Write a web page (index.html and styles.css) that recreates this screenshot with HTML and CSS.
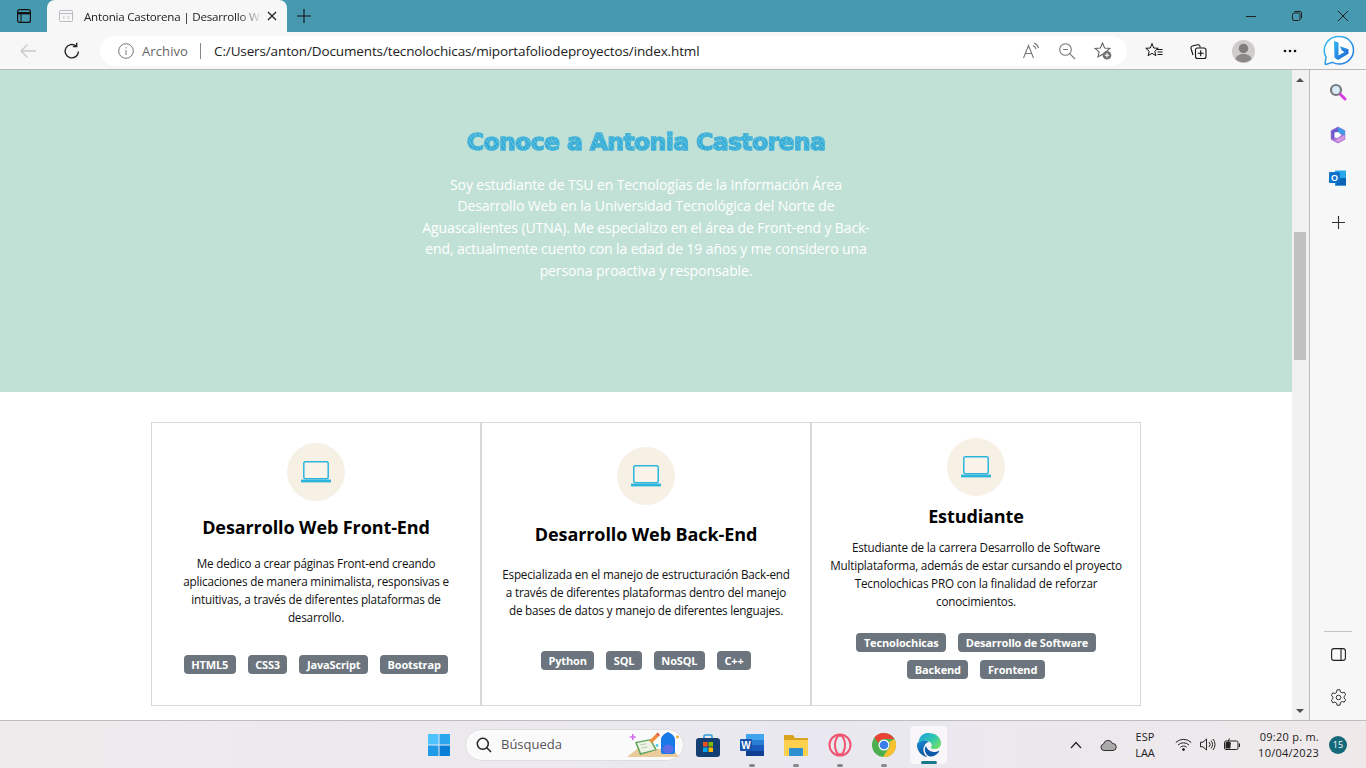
FILE: index.html
```html
<!DOCTYPE html>
<html lang="es">
<head>
    <meta charset="UTF-8">
    <meta name="viewport" content="width=device-width, initial-scale=1.0">
    <title>Antonia Castorena | Desarrollo Web</title>
    <link rel="stylesheet" href="styles.css">
</head>
<body>
    <div class="tabstrip">
        <span class="cell tab-actions">
            <svg width="16" height="16" viewBox="0 0 16 16" fill="none" stroke="#111" stroke-width="1.2"><rect x="1.6" y="1.6" width="12.8" height="12.8" rx="2"/><path d="M1.6 5.2h12.8" stroke-width="2.4"/><path d="M5 5v9" stroke-width="1"/></svg>
        </span>
        <div class="tab">
            <svg class="favicon" width="14" height="14" viewBox="0 0 14 14" fill="none" stroke="#bdb9c2"><rect x=".5" y="1.5" width="13" height="11" rx="1"/><path d="M.5 4.500h13M5.500 7 4 8.500 5.500 10M8.500 7 10 8.500 8.500 10"/></svg>
            <span class="tab-title">Antonia Castorena | Desarrollo W</span>
            <svg class="tab-close" width="10" height="10" viewBox="0 0 10 10" stroke="#222" stroke-width="1.3"><path d="M1 1l8 8M9 1l-8 8"/></svg>
        </div>
        <span class="cell new-tab">
            <svg width="14" height="14" viewBox="0 0 14 14" stroke="#111" stroke-width="1.1"><path d="M7 0v14M0 7h14"/></svg>
        </span>
        <div class="window-btns">
            <span class="cell win-btn"><svg width="12" height="12" viewBox="0 0 12 12" stroke="#222"><path d="M1 6.5h10"/></svg></span>
            <span class="cell win-btn"><svg width="12" height="12" viewBox="0 0 12 12" fill="none" stroke="#222"><rect x="1.5" y="3" width="7.500" height="7.500" rx="1.500"/><path d="M3.500 1.500h5.500a1.500 1.500 0 0 1 1.500 1.500v5.500"/></svg></span>
            <span class="cell win-btn"><svg width="12" height="12" viewBox="0 0 12 12" stroke="#222"><path d="M1 1l10 10M11 1 1 11"/></svg></span>
        </div>
    </div>

    <div class="toolbar">
        <span class="cell nav-btn">
            <svg width="18" height="16" viewBox="0 0 18 16" fill="none" stroke="#c9c9c9" stroke-width="1.3"><path d="M17 8H2M8.500 1.500 2 8l6.500 6.500"/></svg>
        </span>
        <span class="cell nav-btn">
            <svg width="18" height="18" viewBox="0 0 18 18" fill="none" stroke="#222" stroke-width="1.4"><path d="M15.500 9.500a6.700 6.700 0 1 1-2.300-5.400"/><path d="M13.700 .8v3.800H9.900"/></svg>
        </span>
        <div class="address">
            <svg class="info" width="16" height="16" viewBox="0 0 16 16" fill="none" stroke="#777"><circle cx="8" cy="8" r="7.300"/><path d="M8 7v5M8 4.200v1.300"/></svg>
            <span class="archivo">Archivo</span>
            <span class="address-sep"></span>
            <span class="url">C:/Users/anton/Documents/tecnolochicas/miportafoliodeproyectos/index.html</span>
            <div class="address-icons">
                <svg width="18" height="18" viewBox="0 0 18 18" fill="none" stroke="#777" stroke-width="1.100"><path d="M1.500 16 6.500 3.500l5 12.500M3.300 11.500h6.400"/><path d="M11 3.500a5 5 0 0 1 3 3.500M12 1a7 7 0 0 1 4.500 5"/></svg>
                <svg width="18" height="18" viewBox="0 0 18 18" fill="none" stroke="#777" stroke-width="1.100"><circle cx="7.500" cy="7.500" r="5.800"/><path d="M11.700 11.700 17 17M5 7.500h5"/></svg>
                <svg width="18" height="18" viewBox="0 0 18 18" fill="none" stroke="#666" stroke-width="1.100"><path d="M8.500 1 10.600 6l5.200.5-3.900 3.400 1.100 5-4.500-2.700-4.500 2.700 1.100-5L1.200 6.500 6.400 6z"/><circle cx="13" cy="13.300" r="4.300" fill="#707070" stroke="none"/><path d="M13 11v4.600M10.700 13.300h4.600" stroke="#fff"/></svg>
            </div>
        </div>
        <span class="cell tool-btn tool-fav">
            <svg width="18" height="18" viewBox="0 0 18 18" fill="none" stroke="#111" stroke-width="1"><path d="M7 1.500 8.700 6l4.500.3-3.400 3 1.100 4.400-3.900-2.400-3.900 2.400 1.100-4.400-3.400-3L5.300 6z"/><path d="M12 7.500h5.500M12.500 10h5M12.500 12.500h5"/></svg>
        </span>
        <span class="cell tool-btn tool-coll">
            <svg width="18" height="18" viewBox="0 0 18 18" fill="none" stroke="#111" stroke-width="1.100"><path d="M4 13 2 6.500A2 2 0 0 1 3.400 4l5-1.300a2 2 0 0 1 2.500 1.400l.3 1.400"/><rect x="6.500" y="6" width="10.500" height="10.500" rx="2" fill="#f7f7f7"/><path d="M11.700 8.300v6M8.700 11.300h6"/></svg>
        </span>
        <span class="cell tool-btn tool-profile">
            <svg width="23" height="23" viewBox="0 0 23 23"><circle cx="11.500" cy="11.500" r="11.500" fill="#cfcccb"/><circle cx="11.500" cy="8.500" r="4.700" fill="#7f7c7b"/><path d="M3.500 19c1-3.500 4-5 8-5s7 1.500 8 5a11.500 11.500 0 0 1-16 0z" fill="#8b8887"/></svg>
        </span>
        <span class="cell tool-btn tool-more">
            <svg width="14" height="4" viewBox="0 0 14 4" fill="#111"><circle cx="2" cy="2" r="1.300"/><circle cx="7" cy="2" r="1.300"/><circle cx="12" cy="2" r="1.300"/></svg>
        </span>
        <span class="cell bing-btn">
            <svg width="32" height="32" viewBox="0 0 32 32">
                <defs>
                    <linearGradient id="bingB" x1="0" y1="0" x2="1" y2="1"><stop offset="0" stop-color="#35b8f0"/><stop offset="1" stop-color="#1a5fd8"/></linearGradient>
                    <linearGradient id="bingRim" x1="0" y1="0" x2="1" y2="1"><stop offset="0" stop-color="#3cc4f2"/><stop offset="1" stop-color="#1f6fe0"/></linearGradient>
                </defs>
                <path d="M16.500 1.500c8 0 14 6 14 13.500s-6 14-14 14c-2.500 0-5-.5-7-1.700l-6 2c-1 .3-1.500-.3-1.300-1.200l.8-6A14 14 0 0 1 16.500 1.500z" fill="#fff" stroke="url(#bingRim)" stroke-width="1.500"/>
                <path d="M11 6l4.500 1.600v12.800l6-3.500-2.800-1.300-1.700-4.300 8.500 3v4.500l-10.500 6.200-3.500-2.300z" fill="url(#bingB)"/>
            </svg>
        </span>
    </div>

    <div class="workspace">
        <main class="page">
            <section class="hero">
                <h1 class="hero-title">Conoce a Antonia Castorena</h1>
                <p class="hero-text">Soy estudiante de TSU en Tecnologías de la Información Área Desarrollo Web en la Universidad Tecnológica del Norte de Aguascalientes (UTNA). Me especializo en el área de Front-end y Back-end, actualmente cuento con la edad de 19 años y me considero una persona proactiva y responsable.</p>
            </section>
            <section class="cards">
                <article class="card">
                    <div class="card-icon">
                        <svg width="30" height="22" viewBox="0 0 30 22" fill="none" stroke="#2cb5dc" stroke-width="1.500"><rect x="2.800" y=".8" width="24.400" height="16.900" rx="1.500" fill="#f9f3ea"/><path d="M0 20h30" stroke-width="2.800"/></svg>
                    </div>
                    <h2 class="card-title">Desarrollo Web Front-End</h2>
                    <p class="card-text">Me dedico a crear páginas Front-end creando aplicaciones de manera minimalista, responsivas e intuitivas, a través de diferentes plataformas de desarrollo.</p>
                    <div class="tags">
                        <span class="tag">HTML5</span><span class="tag">CSS3</span><span class="tag">JavaScript</span><span class="tag">Bootstrap</span>
                    </div>
                </article>
                <article class="card">
                    <div class="card-icon">
                        <svg width="30" height="22" viewBox="0 0 30 22" fill="none" stroke="#2cb5dc" stroke-width="1.500"><rect x="2.800" y=".8" width="24.400" height="16.900" rx="1.500" fill="#f9f3ea"/><path d="M0 20h30" stroke-width="2.800"/></svg>
                    </div>
                    <h2 class="card-title">Desarrollo Web Back-End</h2>
                    <p class="card-text">Especializada en el manejo de estructuración Back-end a través de diferentes plataformas dentro del manejo de bases de datos y manejo de diferentes lenguajes.</p>
                    <div class="tags">
                        <span class="tag">Python</span><span class="tag">SQL</span><span class="tag">NoSQL</span><span class="tag">C++</span>
                    </div>
                </article>
                <article class="card">
                    <div class="card-icon">
                        <svg width="30" height="22" viewBox="0 0 30 22" fill="none" stroke="#2cb5dc" stroke-width="1.500"><rect x="2.800" y=".8" width="24.400" height="16.900" rx="1.500" fill="#f9f3ea"/><path d="M0 20h30" stroke-width="2.800"/></svg>
                    </div>
                    <h2 class="card-title">Estudiante</h2>
                    <p class="card-text">Estudiante de la carrera Desarrollo de Software Multiplataforma, además de estar cursando el proyecto Tecnolochicas PRO con la finalidad de reforzar conocimientos.</p>
                    <div class="tags">
                        <span class="tag">Tecnolochicas</span><span class="tag">Desarrollo de Software</span><span class="tag">Backend</span><span class="tag">Frontend</span>
                    </div>
                </article>
            </section>
        </main>

        <div class="scrollbar">
            <span class="arrow-up"></span>
            <div class="scroll-track"><div class="scroll-thumb"></div></div>
            <span class="arrow-down"></span>
        </div>

        <aside class="sidebar">
            <span class="cell side-btn">
                <svg width="18" height="18" viewBox="0 0 18 18" fill="none"><circle cx="7" cy="7" r="5" fill="#d8ecf7" stroke="#77777c" stroke-width="2.200"/><path d="M11.500 11.500l4.500 4.500" stroke="#d63ce0" stroke-width="3" stroke-linecap="round"/></svg>
            </span>
            <span class="cell side-btn">
                <svg width="18" height="18" viewBox="0 0 18 18" stroke-linejoin="round"><path d="M9 1.500 15.500 5v8L9 16.500 2.500 13V5z" fill="#a66fd8" stroke="#a66fd8" stroke-width="1.500"/><path d="M9 1.500 15.500 5v4L9 6z" fill="#3d9be6" stroke="#3d9be6"/><path d="M2.500 5 9 1.500V6l-3.500 2v4l-3 1z" fill="#6a5cc8"/><path d="M15.500 9v4L9 16.500l-3-2.500z" fill="#d49be0"/><path d="M5.500 6.500 9 6l3.500 3-4 3-3-.5z" fill="#fff"/></svg>
            </span>
            <span class="cell side-btn">
                <svg width="18" height="18" viewBox="0 0 18 18"><path d="M6 1.500h11v15H6z" fill="#28a8ea"/><path d="M11 9h6v7.500H6z" fill="#0a64b8"/><rect y="3" width="11" height="11" rx="1" fill="#0f72c9"/><text x="5.500" y="11.800" class="outlook-o">O</text></svg>
            </span>
            <span class="cell side-btn side-plus">
                <svg width="13" height="13" viewBox="0 0 13 13" stroke="#333" stroke-width="1.100"><path d="M6.500 0v13M0 6.500h13"/></svg>
            </span>
            <div class="side-spacer"></div>
            <div class="side-sep"></div>
            <span class="cell side-btn">
                <svg width="15" height="13" viewBox="0 0 15 13" fill="none" stroke="#222" stroke-width="1.100"><rect x=".6" y=".6" width="13.800" height="11.800" rx="2.400"/><path d="M10 .6v11.800"/></svg>
            </span>
            <span class="cell side-btn">
                <svg width="17" height="17" viewBox="0 0 17 17" fill="none" stroke="#333" stroke-width="1"><path d="M7 .8h3l.5 2.200 1.600.9 2.100-.7 1.500 2.600-1.600 1.500v1.800l1.600 1.500-1.500 2.600-2.100-.7-1.600.9L10 16.200H7l-.5-2.200-1.600-.9-2.100.7L1.300 11.200l1.600-1.500V7.900L1.300 6.400l1.500-2.600 2.100.7 1.600-.9z"/><circle cx="8.500" cy="8.500" r="2.300"/></svg>
            </span>
        </aside>
    </div>

    <footer class="taskbar">
        <span class="cell task-icon task-start">
            <svg width="24" height="24" viewBox="0 0 24 24"><path d="M1 1h10.500v10.500H1z" fill="#4cc2ff"/><path d="M12.500 1H23v10.500H12.500z" fill="#2aa6ee"/><path d="M1 12.500h10.500V23H1z" fill="#1f9be8"/><path d="M12.500 12.500H23V23H12.500z" fill="#0a7fd6"/></svg>
        </span>
        <div class="task-search">
            <svg width="16" height="16" viewBox="0 0 16 16" fill="none" stroke="#222" stroke-width="1.500"><circle cx="6.800" cy="6.800" r="5.500"/><path d="M10.800 10.800 15 15"/></svg>
            <span class="task-search-text">Búsqueda</span>
            <svg class="search-art" width="58" height="30" viewBox="0 0 58 30">
                <path d="M4 27 14 19h36l6 8z" fill="#eccb9b"/>
                <path d="M12 12 28 9l6 11-17 5z" fill="#5fa55a"/>
                <path d="M14 13l13-2.500 5 9L18 23z" fill="#eef3e5"/>
                <path d="M17 15l6-1.200M18.500 18l6-1.200" stroke="#b9c9b0"/>
                <path d="M26 11l7-7 2.500 2.500L29 13z" fill="#ef8f3c"/>
                <path d="M33 4l1.500-1.500L37 5l-1.500 1.500z" fill="#e8503c"/>
                <path d="M38 10c0-4 3-6 7-8 4 2 7 4 7 8v12a2 2 0 0 1-2 2H40a2 2 0 0 1-2-2z" fill="#1579e8"/>
                <ellipse cx="45" cy="19" rx="5.500" ry="4.500" fill="#5a6ee8"/>
                <path d="M9 4h1.600v2.200h2.200v1.600h-2.200V10H9V7.800H6.800V6.200H9z" fill="#d26ff0"/>
                <circle cx="34" cy="15.500" r="1.400" fill="#50c8e8"/>
                <circle cx="54.500" cy="7" r="1.400" fill="#f2a53b"/>
            </svg>
        </div>
        <span class="cell task-icon task-apps">
            <svg width="24" height="24" viewBox="0 0 24 24" fill="none"><path d="M8 5V3a1 1 0 0 1 1-1h6a1 1 0 0 1 1 1v2" stroke="#2b9fd9" stroke-width="1.500"/><rect y="5" width="24" height="19" rx="3" fill="#143f72"/><rect x="7" y="9" width="4.500" height="4.500" fill="#f25022"/><rect x="12.500" y="9" width="4.500" height="4.500" fill="#7fba00"/><rect x="7" y="14.500" width="4.500" height="4.500" fill="#00a4ef"/><rect x="12.500" y="14.500" width="4.500" height="4.500" fill="#ffb900"/></svg>
        </span>
        <span class="cell task-icon task-running">
            <svg width="24" height="24" viewBox="0 0 24 24"><rect x="6" y="1" width="18" height="22" rx="1" fill="#2b7cd3"/><rect x="6" y="1" width="18" height="6" fill="#41a5ee"/><rect x="6" y="12" width="18" height="6" fill="#185abd"/><rect x="6" y="18" width="18" height="5" fill="#103f91"/><rect y="6" width="12" height="12" rx="1" fill="#1753ab"/><text x="6" y="15.500" class="word-w">W</text></svg>
            <span class="dot"></span>
        </span>
        <span class="cell task-icon task-running">
            <svg width="24" height="22" viewBox="0 0 24 22"><path d="M0 2a1 1 0 0 1 1-1h8l2 3h12a1 1 0 0 1 1 1v3H0z" fill="#d9a320"/><path d="M0 6h24v15a1 1 0 0 1-1 1H1a1 1 0 0 1-1-1z" fill="#fdd04f"/><rect x="5" y="14" width="14" height="8" rx="1" fill="#2d8fd0"/></svg>
            <span class="dot"></span>
        </span>
        <span class="cell task-icon task-running">
            <svg width="24" height="24" viewBox="0 0 24 24" fill="none" stroke="#f0536d" stroke-width="2"><circle cx="12" cy="12" r="10.500"/><ellipse cx="12" cy="12" rx="5" ry="9.500"/></svg>
            <span class="dot"></span>
        </span>
        <span class="cell task-icon task-running">
            <svg width="24" height="24" viewBox="0 0 24 24"><circle cx="12" cy="12" r="12" fill="#4caf50"/><path d="M12 0a12 12 0 0 1 10.400 6H12a6 6 0 0 0-5.600 3.800L2.400 4.400A12 12 0 0 1 12 0z" fill="#ea4335"/><path d="M22.400 6A12 12 0 0 1 11 24l4.800-7.500A6 6 0 0 0 17.200 9z" fill="#fbc02d"/><circle cx="12" cy="12" r="5.500" fill="#fff"/><circle cx="12" cy="12" r="4.300" fill="#3b7de8"/></svg>
            <span class="dot"></span>
        </span>
        <span class="cell task-icon task-active">
            <svg width="24" height="24" viewBox="0 0 24 24">
                <defs>
                    <linearGradient id="edgeTop" x1="0" y1="0" x2="1" y2=".7"><stop offset="0" stop-color="#1b9de2"/><stop offset=".6" stop-color="#30c8b0"/><stop offset="1" stop-color="#6fdc6a"/></linearGradient>
                    <linearGradient id="edgeLeft" x1="0" y1="0" x2=".6" y2="1"><stop offset="0" stop-color="#1a8fdc"/><stop offset="1" stop-color="#0a4f9a"/></linearGradient>
                </defs>
                <path d="M21.860 17.860q.14 0 .25.12.1.13.1.25t-.11.33l-.32.46-.43.53-.44.5q-.21.25-.38.42l-.22.23q-.58.53-1.340 1.040-.76.51-1.600.91-.86.4-1.740.64t-1.670.24q-.9 0-1.690-.28-.8-.28-1.480-.78-.68-.5-1.220-1.170-.53-.66-.92-1.440-.38-.77-.58-1.600-.2-.83-.2-1.670 0-1 .32-1.960.33-.97.87-1.800.14.95.55 1.770.41.82 1.020 1.500.6.68 1.380 1.210.78.54 1.640.9.86.36 1.770.56.92.2 1.800.2 1.120 0 2.180-.24 1.060-.23 2.060-.72l.2-.1.2-.05z" fill="#0c5aa8"/>
                <path d="M6.360 16.590q0 1.100.27 2.150.27 1.060.78 2.030.51.96 1.240 1.770.74.82 1.660 1.400-1.470-.2-2.800-.74-1.330-.55-2.480-1.370-1.150-.83-2.080-1.900-.92-1.070-1.580-2.330T.36 14.940Q0 13.540 0 12.060q0-.81.32-1.490.31-.68.83-1.230.53-.55 1.200-.96.66-.4 1.350-.66.74-.27 1.500-.39.78-.12 1.550-.12.7 0 1.420.1.72.12 1.400.35.68.23 1.320.57.63.35 1.160.83-.35 0-.7.07-.33.07-.65.23v-.02q-.63.28-1.200.74-.57.46-1.050 1.040-.48.58-.87 1.260-.38.67-.65 1.390-.27.71-.42 1.440-.15.72-.15 1.380z" fill="url(#edgeLeft)"/>
                <path d="M11.960.06q1.700 0 3.330.39 1.630.38 3.070 1.150 1.430.77 2.620 1.930 1.180 1.160 1.980 2.700.49.94.76 1.960.28 1 .28 2.080 0 .89-.23 1.700-.24.8-.69 1.480-.45.68-1.100 1.220-.64.53-1.450.88-.54.24-1.110.36-.58.13-1.160.13-.42 0-.97-.03-.54-.03-1.100-.12-.55-.09-1.090-.25-.53-.16-.95-.38-.2-.12-.31-.28-.11-.16-.11-.4 0-.08.03-.12.03-.05.06-.1l.1-.13.08-.14q.33-.38.53-.87.2-.49.2-1.010 0-.79-.36-1.480-.37-.69-.97-1.230-.6-.53-1.350-.92-.76-.39-1.530-.64-.78-.24-1.510-.36-.74-.12-1.290-.12-.86 0-1.720.17-.86.18-1.670.52-.8.34-1.520.84-.72.5-1.320 1.150.05-1.400.37-2.710.33-1.310.96-2.470.63-1.160 1.520-2.120.9-.96 2.010-1.640 1.110-.68 2.400-1.050 1.300-.37 2.730-.37z" fill="url(#edgeTop)"/>
            </svg>
            <span class="active-bar"></span>
        </span>
        <div class="tray">
            <svg class="tray-chevron" width="12" height="8" viewBox="0 0 12 8" fill="none" stroke="#222" stroke-width="1.200"><path d="M1 7l5-5.500L11 7"/></svg>
            <svg class="tray-cloud" width="17" height="12" viewBox="0 0 17 12" fill="#aaa" stroke="#333"><path d="M4 11.500a3.300 3.300 0 0 1-.5-6.500 4.700 4.700 0 0 1 9-.5 3.500 3.500 0 0 1 .5 7z"/></svg>
            <div class="tray-lang"><span>ESP</span><span>LAA</span></div>
            <svg class="tray-wifi" width="17" height="13" viewBox="0 0 17 13" fill="none" stroke="#222"><path d="M.8 4.500a11 11 0 0 1 15.400 0M3 7a8 8 0 0 1 11 0M5.300 9.300a4.600 4.600 0 0 1 6.400 0"/><circle cx="8.500" cy="11.500" r="1" fill="#222"/></svg>
            <svg class="tray-sound" width="16" height="13" viewBox="0 0 16 13" fill="none" stroke="#222"><path d="M.5 4.200h2.500L6.500 1v11L3 8.800H.5z"/><path d="M9 4a3.500 3.500 0 0 1 0 5M11 2.500a6 6 0 0 1 0 8M13 1a8.500 8.500 0 0 1 0 11"/></svg>
            <svg class="tray-battery" width="17" height="13" viewBox="0 0 17 13" fill="none" stroke="#222"><rect x=".5" y="3" width="13.500" height="8.500" rx="1.500"/><path d="M15.500 5.500v3.500"/><path d="M2 4.500h4v5.500H2z" fill="#222"/><path d="M5.500.5 3.500 5h3L4.500 9.500" stroke-width="1"/></svg>
            <div class="tray-clock"><span>09:20 p. m.</span><span>10/04/2023</span></div>
            <span class="tray-badge">15</span>
        </div>
    </footer>
</body>
</html>
```

FILE: styles.css
```css
* {
    box-sizing: border-box;
}

html, body {
    margin: 0;
    height: 768px;
    overflow: hidden;
}

body {
    font-family: "Open Sans", "Noto Sans", sans-serif;
    display: flex;
    flex-direction: column;
    background: #fff;
    color: #000;
}

.cell {
    display: flex;
    align-items: center;
    justify-content: center;
    flex: none;
}

/* top of the browser */
.tabstrip {
    height: 32px;
    background-color: #4699ae;
    display: flex;
    flex: none;
}

.tab-actions {
    width: 47px;
}

.tab {
    width: 240px;
    background-color: #f7f7f7;
    border-radius: 8px 8px 0 0;
    display: flex;
    align-items: center;
    padding: 0 10px 0 12px;
}

.tab-title {
    flex: 1;
    min-width: 0;
    margin-left: 11px;
    font-size: 11.600px;
    letter-spacing: -0.22px;
    color: #222;
    white-space: nowrap;
    -webkit-mask-image: linear-gradient(to right, #000 86%, transparent 100%);
    mask-image: linear-gradient(to right, #000 86%, transparent 100%);
}

.tab-close {
    margin-left: 4px;
}

.new-tab {
    width: 34px;
}

.window-btns {
    margin-left: auto;
    display: flex;
}

.win-btn {
    width: 46px;
}

.toolbar {
    height: 38px;
    background-color: #f7f7f7;
    border-bottom: 1px solid #b9b9b9;
    display: flex;
    align-items: center;
    flex: none;
    padding: 1px 0 0 6px;
}

.nav-btn {
    width: 44px;
}

.address {
    width: 1027px;
    height: 30px;
    margin-left: 6px;
    border-radius: 15px;
    background-color: #fff;
    display: flex;
    align-items: center;
    padding-left: 18px;
}

.archivo {
    margin-left: 8px;
    font-size: 13px;
    letter-spacing: 0.1px;
    color: #666;
}

.address-sep {
    width: 1px;
    height: 16px;
    margin: 0 13px 0 12px;
    background-color: #888;
}

.url {
    font-size: 13.500px;
    letter-spacing: -0.13px;
    color: #222;
}

.address-icons {
    margin-left: auto;
    display: flex;
    gap: 18px;
    padding-right: 15px;
}

.tool-btn {
    width: 45px;
}

.tool-fav {
    margin-left: 4px;
}

.tool-coll {
    width: 43px;
}

.tool-profile {
    width: 48px;
}

.tool-more {
    width: 46px;
}

.bing-btn {
    width: 51px;
}

/* page area */
.workspace {
    height: 650px;
    display: flex;
    flex: none;
}

.page {
    width: 1292px;
    overflow: hidden;
    flex: none;
}

.hero {
    height: 322px;
    background-color: #c1e1d6;
    padding-top: 57px;
    text-align: center;
}

.hero-title {
    margin: 0;
    font-family: "DejaVu Sans", sans-serif;
    font-size: 23.500px;
    line-height: 30px;
    font-weight: 700;
    letter-spacing: -0.6px;
    color: transparent;
    background-image:
        repeating-linear-gradient(60deg, rgba(255, 255, 255, 0.22) 0 1px, transparent 1px 3px),
        repeating-linear-gradient(-40deg, rgba(20, 120, 190, 0.2) 0 1px, transparent 1px 4px),
        linear-gradient(#43b6da, #2ba9d6);
    -webkit-background-clip: text;
    background-clip: text;
    -webkit-text-fill-color: transparent;
    -webkit-text-stroke: 1px #45b4d9;
}

.hero-text {
    width: 452px;
    margin: 16.500px auto 0;
    font-size: 14px;
    line-height: 21.600px;
    letter-spacing: -0.1px;
    color: #fff;
}

.cards {
    width: 990px;
    height: 284px;
    margin: 30px auto 0;
    display: grid;
    grid-template-columns: repeat(3, 330px);
}

.card {
    border: 1px solid #d8d8d8;
    display: flex;
    flex-direction: column;
    justify-content: space-evenly;
    align-items: center;
    padding: 0 16px;
    text-align: center;
}

.card-icon {
    width: 58px;
    height: 58px;
    margin-top: 6px;
    border-radius: 50%;
    background-color: #f7f0e5;
    display: flex;
    align-items: center;
    justify-content: center;
}

.card-title {
    margin: 0;
    font-size: 18px;
    line-height: 24px;
    font-weight: 700;
    letter-spacing: -0.1px;
}

.card-text {
    margin: 1px 0 0;
    font-size: 11.700px;
    line-height: 18px;
    letter-spacing: -0.2px;
    color: #111;
}

.tags {
    margin: 11px 0 13px;
    display: flex;
    flex-wrap: wrap;
    justify-content: center;
}

.tag {
    height: 19px;
    margin: 4px 6px;
    padding: 0 7.500px;
    border-radius: 4px;
    background-color: #6c757d;
    color: #fff;
    font-size: 11px;
    line-height: 19px;
    font-weight: 700;
    letter-spacing: -0.15px;
}

/* scrollbar */
.scrollbar {
    width: 18px;
    background-color: #f1f1f1;
    border-right: 1px solid #bcbcbc;
    display: flex;
    flex-direction: column;
    align-items: center;
    flex: none;
    padding-right: 1px;
}

.arrow-up, .arrow-down {
    width: 0;
    height: 0;
    border-left: 4px solid transparent;
    border-right: 4px solid transparent;
    flex: none;
}

.arrow-up {
    margin-top: 8px;
    border-bottom: 4px solid #505050;
}

.arrow-down {
    margin-bottom: 7px;
    border-top: 4px solid #505050;
}

.scroll-track {
    flex: 1;
    width: 100%;
    padding: 150px 2px 0;
}

.scroll-thumb {
    height: 128px;
    background-color: #c1c1c1;
}

/* right panel */
.sidebar {
    flex: 1;
    background-color: #f7f7f7;
    display: flex;
    flex-direction: column;
    align-items: center;
    padding: 0 0 1px;
}

.side-btn {
    width: 40px;
    height: 43px;
}

.side-plus {
    margin-top: 2px;
}

.side-spacer {
    flex: 1;
}

.side-sep {
    width: 28px;
    height: 1px;
    margin-bottom: 1px;
    background-color: #c4c4c4;
}

.outlook-o {
    font-family: "Liberation Sans", sans-serif;
    font-size: 9px;
    font-weight: 700;
    fill: #fff;
    text-anchor: middle;
}

/* windows taskbar */
.taskbar {
    height: 48px;
    flex: none;
    background: linear-gradient(to right, #efebed, #e9e8f0 60%, #efe9ea);
    border-top: 1px solid #bdbdbd;
    display: flex;
    align-items: center;
    padding-left: 417px;
}

.task-icon {
    position: relative;
    width: 44px;
    height: 38px;
}

.task-start {
    margin-right: 4px;
}

.task-apps {
    margin-left: 2px;
}

.task-search {
    position: relative;
    width: 219px;
    height: 32px;
    border-radius: 16px;
    background-color: #fbfafb;
    border: 1px solid #e0dde0;
    display: flex;
    align-items: center;
    padding-left: 10px;
}

.task-search-text {
    margin-left: 9px;
    padding-bottom: 1px;
    font-size: 13px;
    color: #555;
}

.search-art {
    position: absolute;
    right: 2px;
    top: 0;
}

.word-w {
    font-family: "Liberation Sans", sans-serif;
    font-size: 10px;
    font-weight: 700;
    fill: #fff;
    text-anchor: middle;
}

.dot {
    position: absolute;
    left: 19px;
    bottom: -3px;
    width: 6px;
    height: 3px;
    border-radius: 2px;
    background-color: #8a8a8a;
}

.task-active {
    width: 37px;
    margin-left: 4px;
    background-color: #f8f6f8;
    border-radius: 4px;
}

.active-bar {
    position: absolute;
    left: 11px;
    bottom: 0;
    width: 16px;
    height: 3px;
    border-radius: 2px;
    background-color: #1a7a8c;
}

.tray {
    margin-left: auto;
    display: flex;
    align-items: center;
    font-size: 11px;
    color: #222;
}

.tray-cloud {
    margin-left: 18px;
}

.tray-lang {
    width: 28px;
    margin-left: 14px;
    display: flex;
    flex-direction: column;
    align-items: center;
    line-height: 16px;
}

.tray-wifi {
    margin-left: 16px;
}

.tray-sound {
    margin-left: 8px;
}

.tray-battery {
    margin-left: 8px;
}

.tray-clock {
    width: 72px;
    margin-left: 6px;
    display: flex;
    flex-direction: column;
    align-items: flex-end;
    line-height: 16px;
    letter-spacing: 0.25px;
}

.tray-badge {
    width: 18px;
    height: 18px;
    margin: 0 19px 0 10px;
    border-radius: 50%;
    background-color: #16697a;
    color: #fff;
    font-size: 9px;
    line-height: 18px;
    text-align: center;
}
```
